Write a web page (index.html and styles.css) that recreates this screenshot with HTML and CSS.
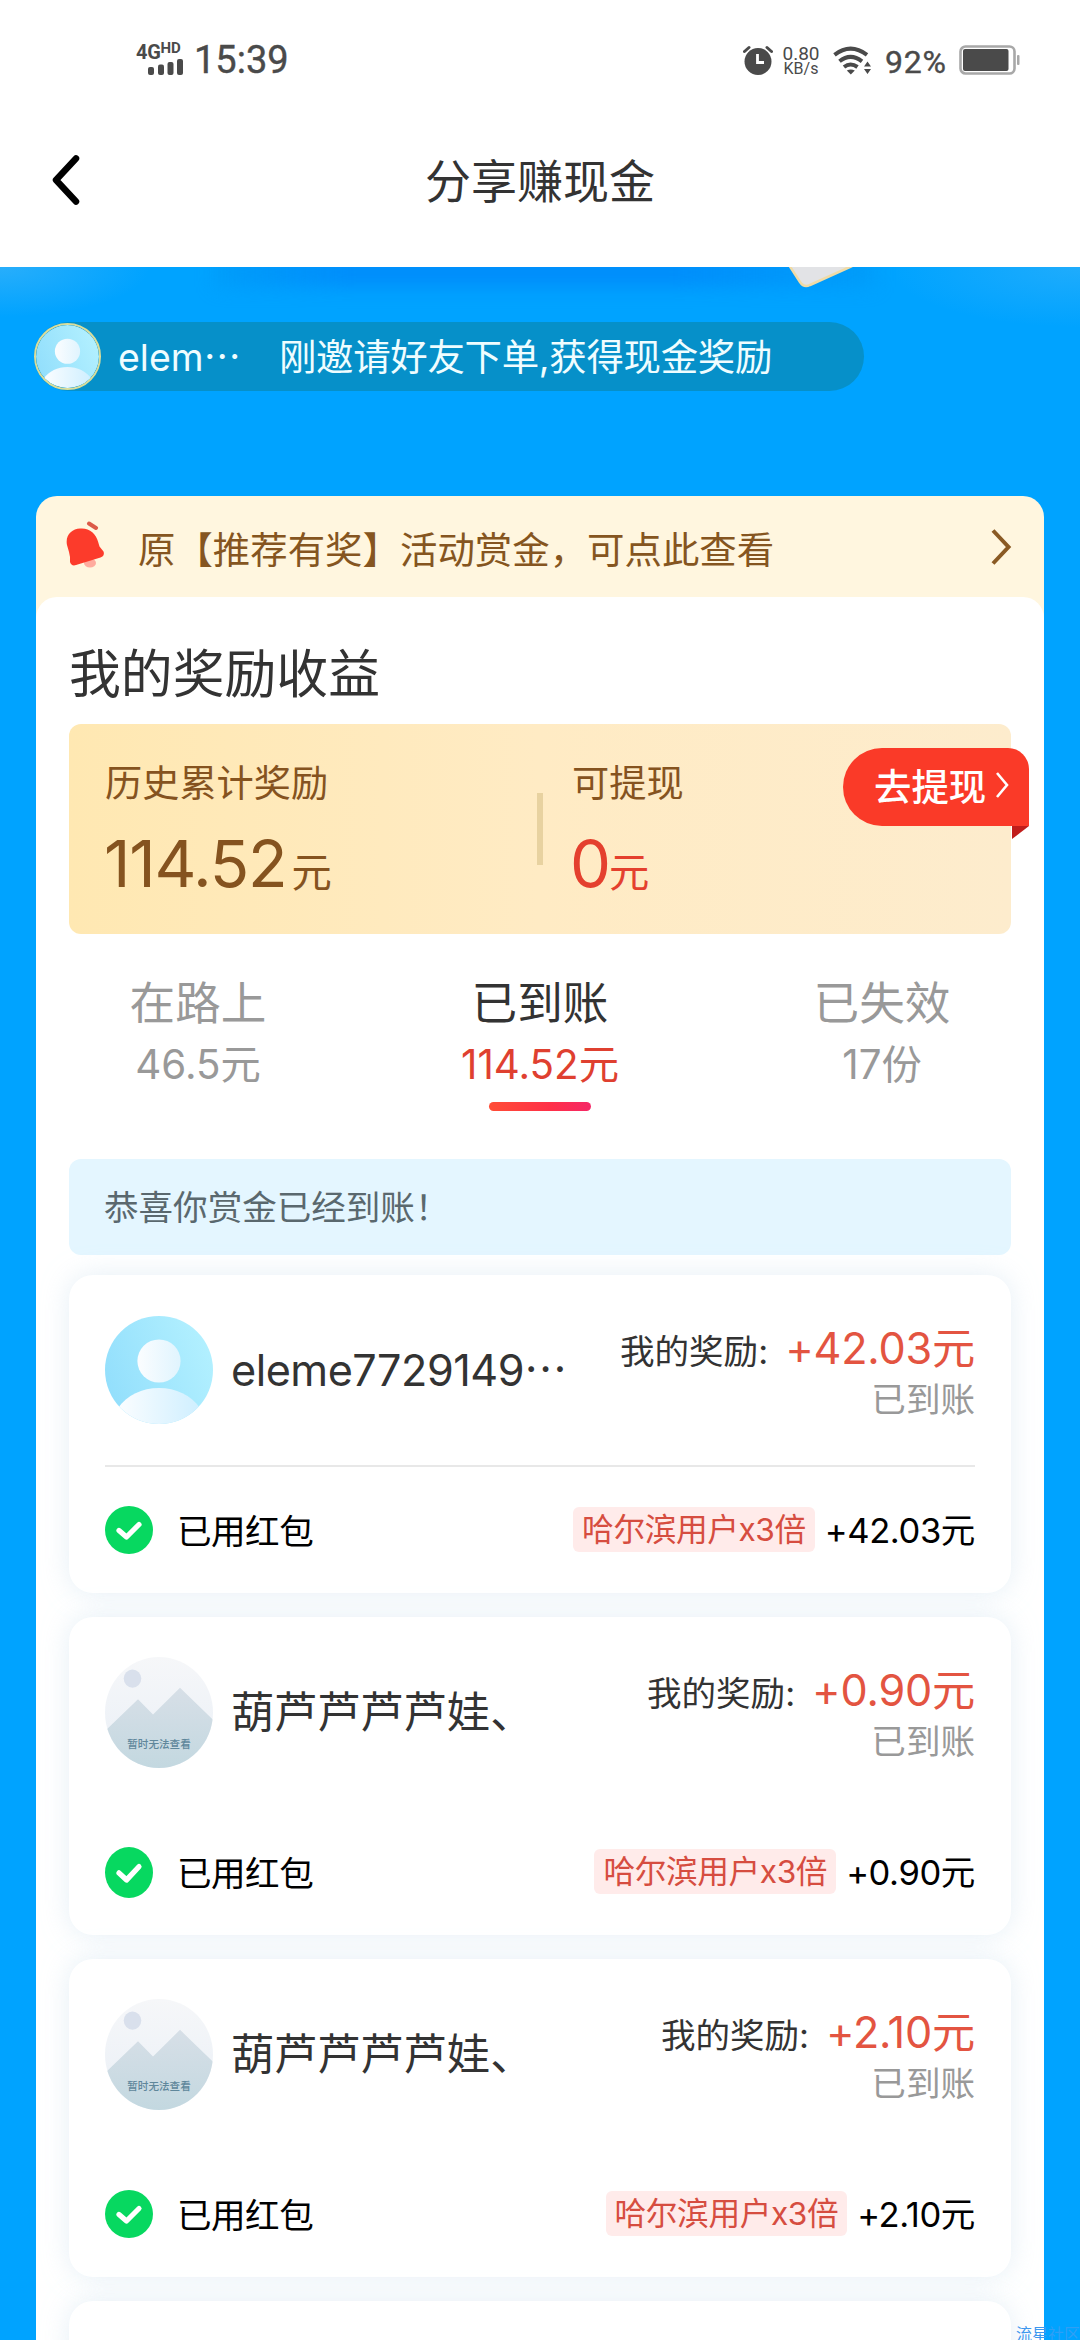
FILE: index.html
```html
<!DOCTYPE html>
<html lang="zh-CN">
<head>
<meta charset="utf-8">
<title>分享赚现金</title>
<link rel="stylesheet" href="styles.css">
</head>
<body>
<svg class="defs" width="0" height="0" aria-hidden="true">
  <defs>
    <linearGradient id="sky" x1="0" y1="0.6" x2="1" y2="0.2"><stop offset="0" stop-color="#93dffc"/><stop offset="1" stop-color="#b4f1ff"/></linearGradient>
    <linearGradient id="body" x1="0" y1="0" x2="1" y2="0"><stop offset="0" stop-color="#fbfdff"/><stop offset="1" stop-color="#cfefff"/></linearGradient>
    <linearGradient id="head" x1="0" y1="0" x2="1" y2="0"><stop offset="0" stop-color="#fbfdff"/><stop offset="1" stop-color="#e0f4fe"/></linearGradient>
    <linearGradient id="air" x1="0" y1="0" x2="0" y2="1"><stop offset="0" stop-color="#f6f7f9"/><stop offset="1" stop-color="#e9eff6"/></linearGradient>
    <linearGradient id="hill" x1="0" y1="0" x2="0" y2="1"><stop offset="0" stop-color="#d7dfe7"/><stop offset="1" stop-color="#c3d8e0"/></linearGradient>
    <clipPath id="round"><circle cx="54" cy="54" r="54"/></clipPath>
    <symbol id="person" viewBox="0 0 108 108">
      <g clip-path="url(#round)"><rect width="108" height="108" fill="url(#sky)"/>
      <circle cx="54" cy="45" r="21.6" fill="url(#head)"/>
      <path d="M13 92C22 79 37 72 54 72s32 7 41 20v20H13z" fill="url(#body)"/></g>
    </symbol>
    <symbol id="check" viewBox="0 0 48 48" preserveAspectRatio="none">
      <circle cx="24" cy="24" r="24" fill="#07d860"/>
      <path d="M14 24.500l7.500 6.500L34 18.500" fill="none" stroke="#fff" stroke-width="5.200" stroke-linecap="round" stroke-linejoin="round"/>
    </symbol>
    <symbol id="picture" viewBox="0 0 108 108" preserveAspectRatio="none">
      <g clip-path="url(#round)"><rect width="108" height="108" fill="url(#air)"/>
      <circle cx="27.500" cy="21" r="8.800" fill="#d9e0ec"/>
      <path d="M0 72L33 41l15 15L75 30l33 31v47H0z" fill="url(#hill)"/></g>
    </symbol>
  </defs>
</svg>
<div class="screen">
  <div class="statusbar">
    <div class="net">
      <div class="net-type">4G<span class="hd">HD</span></div>
      <svg class="bars" width="36" height="16" viewBox="0 0 36 16"><g fill="#4a4a4a"><rect x="0" y="8" width="6" height="8" rx="2"/><rect x="10" y="5.500" width="6" height="10.500" rx="2"/><rect x="19.500" y="3" width="6" height="13" rx="2"/><rect x="29" y="0" width="6" height="16" rx="2"/></g></svg>
    </div>
    <div class="clock">15:39</div>
    <div class="status-right">
      <svg class="alarm" width="30" height="30" viewBox="0 0 30 30"><circle cx="15" cy="16.500" r="13.500" fill="#4a4a4a"/><path d="M1.500 6.500L6 2.500M28.500 6.500L24 2.500" stroke="#4a4a4a" stroke-width="3" stroke-linecap="round"/><path d="M14.500 9v8.500h6.500" fill="none" stroke="#fff" stroke-width="2.800"/></svg>
      <div class="speed"><span class="rate">0.80</span><span class="unit">KB/s</span></div>
      <svg class="wifi" width="39" height="29" viewBox="0 0 39 29"><g fill="none" stroke="#4a4a4a" stroke-width="4"><path d="M1.500 8.800Q17.500-3.600 34 8.800"/><path d="M6.500 15.300Q17.500 6.400 29 15.300"/><path d="M11 21Q17.500 16 24.500 21"/></g><path d="M13.800 24.500q4-2.200 8 0l-4 4z" fill="#4a4a4a"/><path d="M31 20.500l3.500-5 3.500 5zM31 23l3.500 5 3.500-5z" fill="#4a4a4a"/></svg>
      <div class="percent">92%</div>
      <svg class="battery" width="61" height="30" viewBox="0 0 61 30"><rect x="1.500" y="1.500" width="54" height="27" rx="5" fill="none" stroke="#a8a8a8" stroke-width="2.600"/><rect x="4" y="4" width="45.500" height="22" rx="2" fill="#4a4a4a"/><rect x="58" y="10" width="2.500" height="10" rx="1" fill="#a8a8a8"/></svg>
    </div>
  </div>
  <header class="navbar">
    <svg class="back" width="32" height="56" viewBox="0 0 32 56"><path d="M27 6.500L7 28l20 21.500" fill="none" stroke="#000" stroke-width="6.500" stroke-linecap="round" stroke-linejoin="round"/></svg>
    <h1>分享赚现金</h1>
  </header>

  <main class="page">
    <div class="banner-edge"></div>
    <svg class="coupon" width="66" height="22" viewBox="0 0 66 22"><path d="M1 -2L12 15q4 6 10 3L64 -1z" fill="#e2e3e6" stroke="#f0dba6" stroke-width="2.500"/></svg>
    <div class="ticker">
      <svg class="ticker-avatar" width="67" height="67"><use href="#person" width="63" height="63"/></svg>
      <span class="ticker-name">elem<span class="dots">…</span></span>
      <span class="ticker-text">刚邀请好友下单,获得现金奖励</span>
    </div>

    <section class="panel">
      <div class="notice">
        <svg class="bell" width="38" height="47" viewBox="0 0 38 47"><path d="M23 2.500l7 4.500" stroke="#dc5a48" stroke-width="4" stroke-linecap="round"/><ellipse cx="24" cy="42" rx="6" ry="4.500" fill="#ffab9e"/><path d="M1 24C-1 14 6 8 14 7.500c9-1 16 5 18 13l1.500 5 4 5c1 3 0 5-3 6L10 44c-3 1-5 0-6-3l0-5-1-5z" fill="#fc3b2b"/></svg>
        <span class="notice-text">原【推荐有奖】活动赏金，可点此查看</span>
        <svg class="notice-arrow" width="22" height="38" viewBox="0 0 22 38"><path d="M3 2.500L18.500 19 3 35.500" fill="none" stroke="#8a5a24" stroke-width="4"/></svg>
      </div>
      <div class="content">
        <h2>我的奖励收益</h2>
        <div class="summary">
          <div class="stat total"><span class="label">历史累计奖励</span><span class="value"><b>114.52</b>元</span></div>
          <div class="stat cash"><span class="label">可提现</span><span class="value"><b>0</b>元</span></div>
          <div class="withdraw"><span>去提现</span><svg width="15" height="28" viewBox="0 0 15 28"><path d="M2 2l10 12L2 26" fill="none" stroke="#fff" stroke-width="2.600"/></svg></div>
        </div>
        <nav class="tabs">
          <div class="tab"><span class="tab-name">在路上</span><span class="tab-value">46.5元</span></div>
          <div class="tab active"><span class="tab-name">已到账</span><span class="tab-value">114.52元</span></div>
          <div class="tab"><span class="tab-name">已失效</span><span class="tab-value">17份</span></div>
        </nav>
        <div class="tip">恭喜你赏金已经到账！</div>
        <div class="list">
          <article class="card">
            <div class="friend lined">
              <svg class="avatar" width="108" height="108"><use href="#person" width="108" height="108"/></svg>
              <span class="name latin">eleme7729149<span class="dots">…</span></span>
              <div class="reward"><div class="reward-line">我的奖励:<span class="gain">+42.03元</span></div><div class="state">已到账</div></div>
            </div>
            <div class="detail">
              <svg class="check" width="48" height="48"><use href="#check" width="48" height="48"/></svg>
              <span class="packet">已用红包</span><span class="tag">哈尔滨用户x3倍</span><span class="sum">+42.03元</span>
            </div>
          </article>
          <article class="card">
            <div class="friend">
              <div class="avatar pic"><svg width="108" height="111"><use href="#picture" width="108" height="111"/></svg><span class="pic-text">暂时无法查看</span></div>
              <span class="name">葫芦芦芦芦娃、</span>
              <div class="reward"><div class="reward-line">我的奖励:<span class="gain">+0.90元</span></div><div class="state">已到账</div></div>
            </div>
            <div class="detail">
              <svg class="check" width="48" height="51"><use href="#check" width="48" height="51"/></svg>
              <span class="packet">已用红包</span><span class="tag">哈尔滨用户x3倍</span><span class="sum">+0.90元</span>
            </div>
          </article>
          <article class="card">
            <div class="friend">
              <div class="avatar pic"><svg width="108" height="111"><use href="#picture" width="108" height="111"/></svg><span class="pic-text">暂时无法查看</span></div>
              <span class="name">葫芦芦芦芦娃、</span>
              <div class="reward"><div class="reward-line">我的奖励:<span class="gain">+2.10元</span></div><div class="state">已到账</div></div>
            </div>
            <div class="detail">
              <svg class="check" width="48" height="48"><use href="#check" width="48" height="48"/></svg>
              <span class="packet">已用红包</span><span class="tag">哈尔滨用户x3倍</span><span class="sum">+2.10元</span>
            </div>
          </article>
          <article class="card"></article>
        </div>
      </div>
    </section>
    <div class="watermark">流星<span class="faint">社区</span></div>
  </main>
</div>
</body>
</html>
```
FILE: styles.css
```css
* { box-sizing: border-box; margin: 0; padding: 0; }
body { background: #fff; font-family: Inter, "Noto Sans CJK SC", sans-serif; color: #333; }
.defs { position: absolute; }
svg { display: block; flex: none; }
.screen { width: 1080px; height: 2340px; overflow: hidden; display: flex; flex-direction: column; }
span, .clock, .tip { white-space: nowrap; }
.dots { font-family: "Noto Sans CJK SC", sans-serif; }

/* Status bar */
.statusbar { height: 95px; display: flex; align-items: flex-start; padding: 0 60px 0 136px; color: #4a4a4a; font-family: Roboto, sans-serif; }
.net { width: 47px; padding-top: 42px; }
.net-type { height: 17px; font-size: 20px; line-height: 20px; font-weight: 700; letter-spacing: -0.3px; display: flex; }
.hd { font-size: 15px; line-height: 13px; letter-spacing: 0; }
.bars { margin-left: 12px; }
.clock { margin: 38px 0 0 11px; font-size: 38px; line-height: 45px; font-weight: 400; -webkit-text-stroke: 0.4px #4a4a4a; }
.status-right { margin-left: auto; display: flex; align-items: center; padding-top: 45px; height: 75px; }
.speed { width: 38px; margin-left: 9px; display: flex; flex-direction: column; align-items: center; }
.rate { font-size: 19px; line-height: 17px; }
.unit { font-size: 16px; line-height: 14px; }
.wifi { margin-left: 13px; }
.percent { width: 74px; margin-left: 13px; font-size: 32px; line-height: 32px; letter-spacing: 0.8px; -webkit-text-stroke: 0.4px #4a4a4a; padding-top: 3px; }

/* Title bar */
.navbar { height: 172px; display: flex; align-items: flex-start; }
.back { margin: 57px 0 0 49px; }
.navbar h1 { width: 918px; margin: 57px 0 0; text-align: center; font-size: 46px; line-height: 58px; font-weight: 400; }

/* Blue page */
.page { position: relative; flex: 1; overflow: hidden; padding: 55px 36px 0;
  background: radial-gradient(ellipse 150px 50px at 0 0, #28aefb, #00a3ff00), radial-gradient(ellipse 190px 60px at 100% 0, #1facfc, #00a3ff00), #00a3ff; }
.banner-edge { position: absolute; top: -10px; left: 215px; width: 660px; height: 30px;
  background: linear-gradient(90deg, #0098f588, #008dfb 20%, #008dfb 70%, #0098f588); filter: blur(9px); }
.coupon { position: absolute; top: 0; left: 788px; }
.ticker { position: relative; width: 830px; height: 69px; margin-left: -2px; border-radius: 35px; background: #0690c9; display: flex; align-items: center; color: #effdff; }
.ticker-avatar { border-radius: 50%; border: 2px solid #d9dd9c; }
.ticker-name { width: 161px; margin: -3px 0 0 17px; font-size: 37.44px; }
.ticker-text { font-size: 37.44px; letter-spacing: -0.3px; margin-top: -3px; }

.panel { margin-top: 105px; height: 1900px; background: #fff6df; border-radius: 21px 21px 0 0; }
.notice { height: 101px; display: flex; align-items: center; padding: 5px 32px 0 30px; color: #855520; font-size: 37.44px; }
.notice-text { margin-top: -3px; }
.bell { margin: -9px 34px 0 0; }
.notice-arrow { margin: -5px 0 0 auto; }
.content { height: 1800px; background: #fff; border-radius: 21px 21px 0 0; padding: 42px 33px 0; }
h2 { height: 85px; font-size: 51.84px; line-height: 72px; font-weight: 400; }

/* Reward summary */
.summary { position: relative; display: flex; height: 210px; padding: 36px; border-radius: 12px; background: linear-gradient(90deg, #ffe8b2, #ffebc4 50%, #fdeccd); color: #85531f; }
.stat { display: flex; flex-direction: column; }
.total { width: 438px; height: 72px; margin-top: 33px; border-right: 6px solid #e8d2a0; }
.total .label { margin-top: -33px; }
.cash { padding-left: 29px; }
.label { font-size: 37.2px; line-height: 48px; }
.value { display: flex; align-items: baseline; height: 80px; margin-top: 16px; font-size: 40.3px; line-height: 80px; }
.value b { font-weight: 400; font-size: 65px; margin: 0 5px 0 -1px; letter-spacing: -1.2px; }
.cash .value { color: #e4402e; }
.cash b { margin: 0 0 0 -2px; letter-spacing: -2px; }
.withdraw { position: absolute; right: -18px; top: 24px; width: 186px; height: 78px; padding: 0 0 4px 31px; display: flex; align-items: center; gap: 9px; border-radius: 39px 21px 0 39px; background: #fa3a28; color: #fff; font-size: 37.44px; font-weight: 500; }
.withdraw::after { content: ""; position: absolute; right: 0; top: 78px; width: 17px; height: 13px; background: #c01d1b; clip-path: polygon(0 0, 100% 0, 0 100%); }

/* Tabs */
.tabs { display: flex; justify-content: space-between; height: 225px; padding: 42px 39px 0; }
.tab { width: 180px; display: flex; flex-direction: column; align-items: center; color: #999; }
.tab-name { font-size: 45.6px; line-height: 56px; }
.tab-value { font-size: 40.3px; line-height: 50px; margin-top: 8px; }
.active { color: #333; }
.active .tab-value { color: #df4030; }
.active::after { content: ""; width: 102px; height: 9px; margin-top: 12px; border-radius: 5px; background: linear-gradient(90deg, #ff4d36, #ff3048 60%, #f52867); }
.tip { height: 96px; padding-left: 35px; border-radius: 12px; background: #e4f6ff; font-size: 34.56px; line-height: 97px; color: #5a686e; }

/* Reward list */
.list { display: flex; flex-direction: column; gap: 24px; margin-top: 20px; }
.card { height: 318px; padding: 0 36px; border-radius: 24px; background: #fff; box-shadow: 0 0 26px #d3e4f099; }
.friend { height: 192px; display: flex; align-items: center; border-bottom: 2px solid transparent; }
.lined { border-color: #e8e8e8; }
.avatar { margin-right: 18px; }
.pic { position: relative; width: 108px; height: 111px; }
.pic-text { position: absolute; left: 0; width: 108px; top: 80px; text-align: center; font-size: 10.6px; line-height: 16px; font-weight: 500; color: #5f879b; }
.name { font-size: 43.2px; line-height: 60px; }
.latin { letter-spacing: -0.5px; margin-top: -3px; }
.reward { margin: 3px 0 0 auto; text-align: right; font-size: 34.56px; }
.reward-line { height: 53px; line-height: 49px; white-space: nowrap; }
.gain { margin-left: 17px; font-size: 43.2px; letter-spacing: -0.2px; color: #e35441; }
.state { height: 42px; line-height: 46px; color: #999; }
.detail { height: 127px; display: flex; align-items: center; padding-bottom: 1px; font-size: 34.56px; color: #000; }
.packet { margin: -2px auto 0 24px; letter-spacing: -0.5px; }
.tag { height: 45px; line-height: 45px; padding: 0 9px; margin: -2px 10px 0 0; border-radius: 6px; background: #ffebea; color: #d64d40; font-size: 31.68px; letter-spacing: -0.4px; }
.sum { margin-top: -5px; letter-spacing: -0.4px; }
.watermark { position: absolute; left: 1016px; bottom: -6px; font-size: 16px; line-height: 24px; white-space: nowrap; color: #3d97ee; }
.faint { color: #2f9ff5; }
```
